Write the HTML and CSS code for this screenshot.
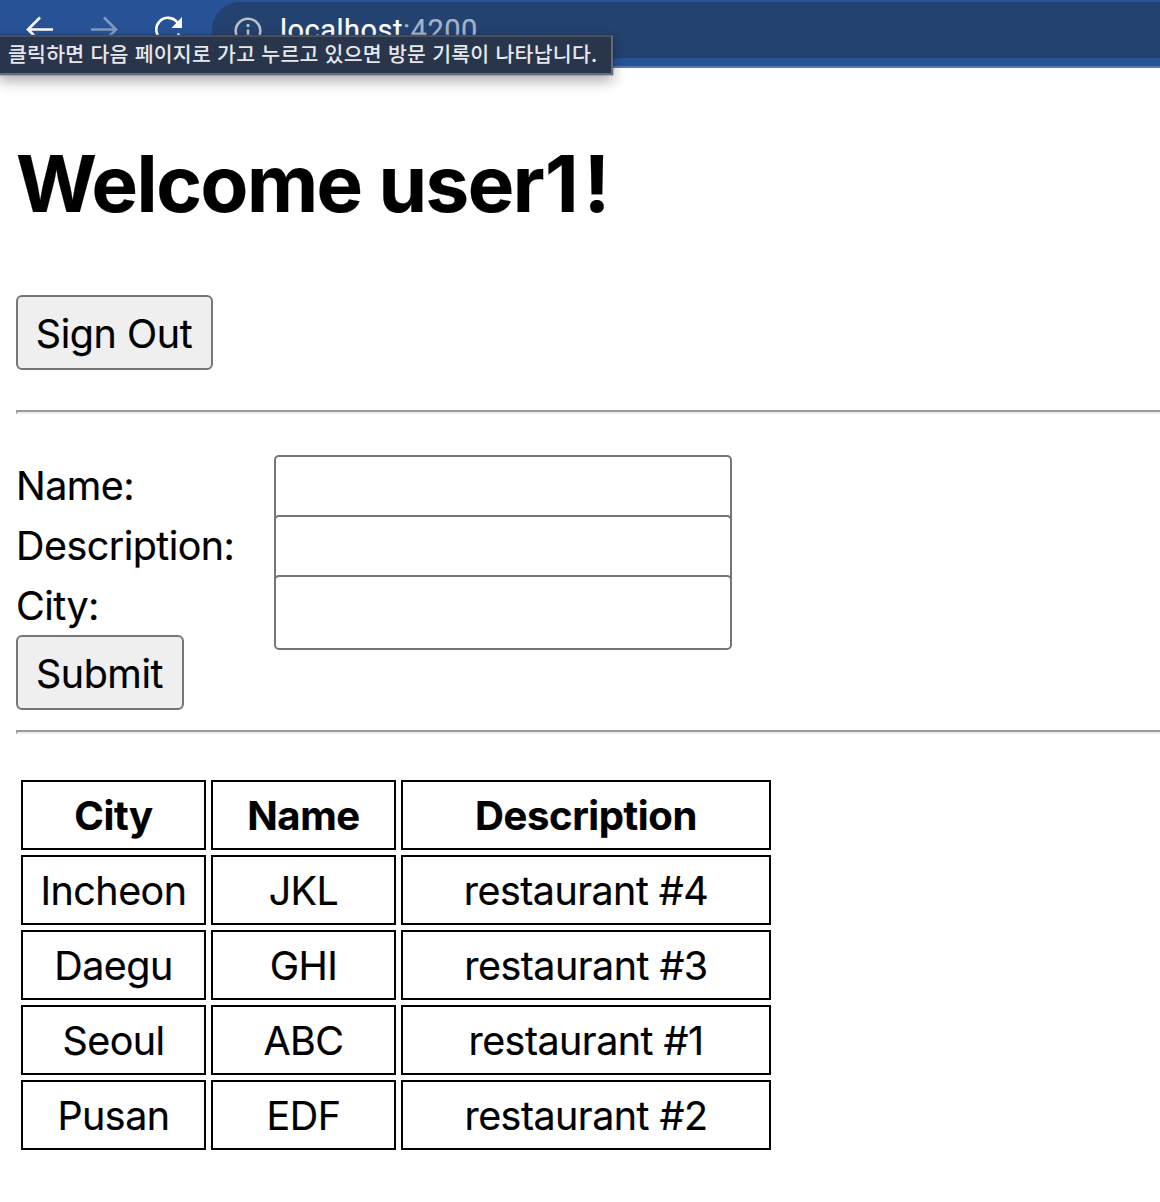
FILE: index.html
```html
<!DOCTYPE html>
<html lang="ko">
<head>
<meta charset="utf-8">
<title>Restaurants</title>
<link rel="stylesheet" href="styles.css">
</head>
<body>
<header class="toolbar">
  <nav class="nav-buttons">
    <svg class="icon" width="28" height="28" viewBox="0 0 28 28"><path d="M27 14.5H3M14 2.5 2 14.5l12 12" /></svg>
    <svg class="icon icon-disabled" width="28" height="28" viewBox="0 0 28 28"><path d="M1 14.5h24M14 2.5l12 12-12 12" /></svg>
    <svg class="icon" width="28" height="28" viewBox="0 0 28 28"><path d="M23.5 7.7A11.7 11.7 0 1 0 25 18.5" /><path class="icon-fill" d="M28 2V13H17.5z" /></svg>
  </nav>
  <div class="address">
    <svg class="info" width="28" height="28" viewBox="0 0 28 28"><circle cx="14" cy="14" r="12.3" /><path d="M14 12.5V21M14 7v3" /></svg>
    <span class="host">localhost</span><span class="port">:4200</span>
  </div>
  <div class="tooltip" role="tooltip">클릭하면 다음 페이지로 가고 누르고 있으면 방문 기록이 나타납니다.</div>
</header>
<main class="page">
  <h1 class="title">Welcome use<span class="title-r">r</span><span class="title-end">1</span>!</h1>
  <button class="button sign-out">Sign Out</button>
  <hr class="rule">
  <form class="form">
    <label class="row"><span class="label">Name:</span><input class="field" type="text"></label>
    <label class="row"><span class="label">Description:</span><input class="field" type="text"></label>
    <label class="row"><span class="label">City:</span><input class="field" type="text"></label>
    <button class="button submit" type="button">Submit</button>
  </form>
  <hr class="rule">
  <table class="listing">
    <thead><tr><th>City</th><th>Name</th><th class="wide">Description</th></tr></thead>
    <tbody>
      <tr><td>Incheon</td><td>JKL</td><td>restaurant #4</td></tr>
      <tr><td>Daegu</td><td>GHI</td><td>restaurant #3</td></tr>
      <tr><td>Seoul</td><td>ABC</td><td>restaurant #1</td></tr>
      <tr><td>Pusan</td><td>EDF</td><td>restaurant #2</td></tr>
    </tbody>
  </table>
</main>
</body>
</html>
```
FILE: styles.css
```css
* { box-sizing: border-box; }
html { background: #fff; overflow: hidden; }
body {
  margin: 0;
  color: #000;
  font: 39.4px/60px Inter, "Noto Sans CJK KR", sans-serif;
  letter-spacing: -0.5px;
  -webkit-text-stroke: 0.2px;
}
.toolbar {
  position: relative;
  display: flex;
  align-items: flex-start;
  height: 68px;
  padding-top: 2px;
  background: #285296;
  border-bottom: 2px solid #567bae;
}
.nav-buttons { display: flex; gap: 36px; padding: 13px 0 0 26px; width: 212px; flex: none; }
.icon { flex: none; fill: none; stroke: #fff; stroke-width: 2.6; }
.icon-disabled { stroke: #8099c2; }
.icon-fill { fill: #fff; stroke: none; }
.address {
  flex: 1;
  display: flex;
  align-items: center;
  height: 56px;
  padding: 1px 0 0 22px;
  background: #24426f;
  border-radius: 28px 0 0 28px;
  font: 29px/55px Roboto, sans-serif;
  letter-spacing: 0.5px;
}
.info { fill: none; stroke: #bcc0c7; stroke-width: 2.6; margin-right: 18px; }
.host { color: #fff; }
.port { color: #a5b3c9; }
.tooltip {
  position: absolute;
  top: 35px;
  left: -3px;
  width: 616px;
  height: 40px;
  padding-left: 9px;
  background: #29354b;
  border: 2px solid #646c79;
  border-top: 2px solid #454f61;
  box-shadow: 0 0 1px #111, 0 6px 14px rgba(0, 0, 0, 0.32);
  color: #e6e8eb;
  font: 500 20.5px/32px "Noto Sans CJK KR", sans-serif;
  letter-spacing: 0.25px;
  white-space: nowrap;
  -webkit-text-stroke: 0;
}
.page { padding: 0 0 0 16px; }
.title { margin: 0; padding: 66px 0 61px; font-size: 78px; line-height: 100px; font-weight: 700; letter-spacing: -1.5px; }
.title-r { letter-spacing: 0.5px; }
.title-end { letter-spacing: 5px; }
.button {
  display: block;
  height: 75px;
  padding: 2px 1px 0 0;
  background: #efefef;
  border: 2px solid #767676;
  border-radius: 6px;
  color: #000;
  font: inherit;
  letter-spacing: -0.4px;
}
.sign-out { width: 197px; }
.submit { width: 168px; }
.rule { height: 4px; margin: 40px 0 0; border: 2px inset #eee; border-right: 0; }
.form { padding-top: 41px; }
.row { display: flex; height: 60px; }
.label { width: 258px; padding-top: 1px; }
.field {
  width: 458px;
  height: 75px;
  padding: 2px 4px;
  background: #fff;
  border: 2px solid #767676;
  border-radius: 5px;
  font: inherit;
}
.form + .rule { margin-top: 20px; }
.listing { margin-top: 41px; border-spacing: 5px; table-layout: fixed; width: 760px; }
th, td { height: 70px; padding: 2px 0 0; border: 2px solid #000; text-align: center; line-height: 60px; }
th { font-size: 40px; letter-spacing: -0.4px; }
.wide { width: 370px; }
```
